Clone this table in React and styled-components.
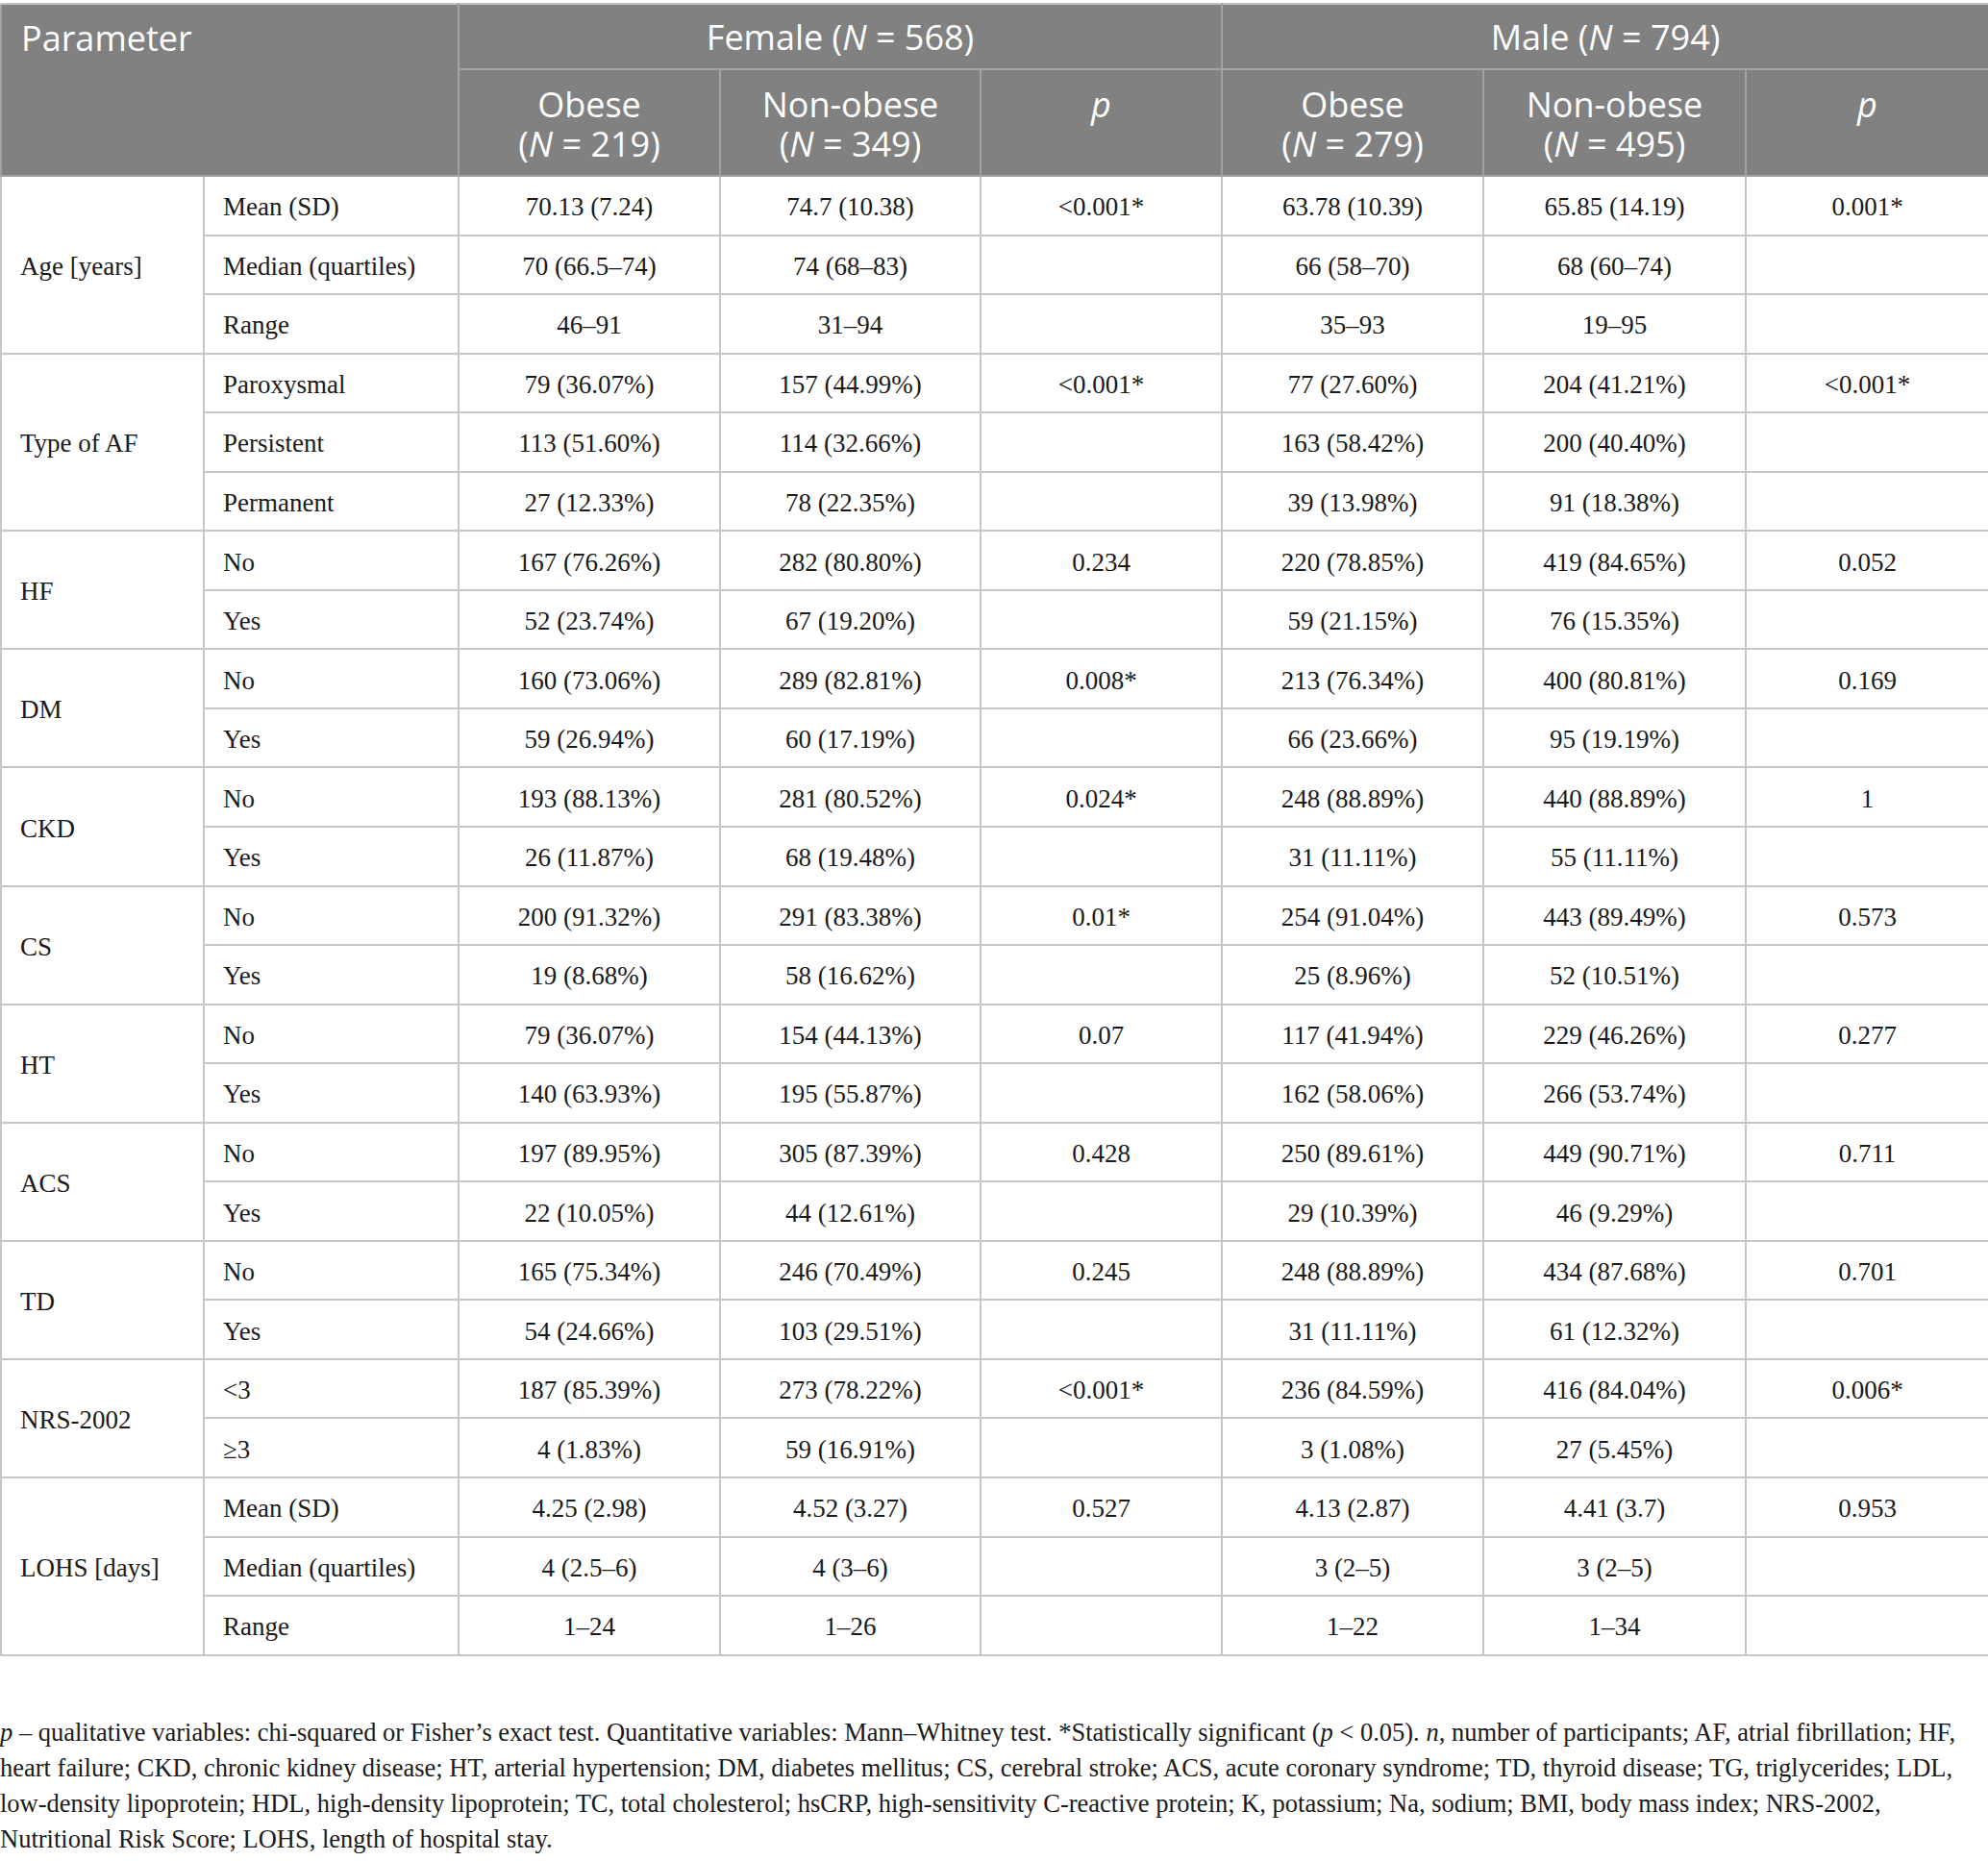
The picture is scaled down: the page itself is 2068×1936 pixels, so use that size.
import React from "react";
import styled, { createGlobalStyle } from "styled-components";

const Global = createGlobalStyle`
  html, body { margin: 0; padding: 0; background: #ffffff; }
  body { font-family: "Liberation Serif", "Times New Roman", serif; color: #1a1a1a; }
`;

const Page = styled.div`
  width: 2068px;
  padding-top: 3px;
  box-sizing: border-box;
`;

const Table = styled.table`
  width: 2068px;
  table-layout: fixed;
  border-collapse: collapse;
  border: 2px solid #c2c2c2;
`;

const HeadRow = styled.tr`
  height: ${(p) => p.$h}px;
`;

const HeadCell = styled.th`
  background: #808180;
  color: #ffffff;
  font-family: "Open Sans", "Noto Sans", sans-serif;
  font-weight: 400;
  font-size: 36px;
  line-height: 41px;
  text-align: ${(p) => (p.$left ? "left" : "center")};
  vertical-align: top;
  padding: ${(p) => (p.$left ? "14px 0 0 20px" : `${p.$pt || 13}px 6px 0`)};
  border: 2px solid #a3a3a3;
  border-top-color: #c2c2c2;
`;

const Row = styled.tr`
  height: 61.55px;
`;

const Cell = styled.td`
  font-size: 27px;
  line-height: 30px;
  text-align: ${(p) => (p.$left ? "left" : "center")};
  padding: ${(p) => (p.$left ? "3px 0 0 19px" : "3px 4px 0")};
  border: 2px solid #c6c6c6;
  white-space: nowrap;
`;

const Footnote = styled.div`
  margin-top: 61px;
  font-size: 26.5px;
  line-height: 37px;
  color: #1a1a1a;
`;

const Line = styled.div`
  white-space: nowrap;
`;

const groups = [
  {
    label: "Age [years]",
    rows: [
      ["Mean (SD)", "70.13 (7.24)", "74.7 (10.38)", "<0.001*", "63.78 (10.39)", "65.85 (14.19)", "0.001*"],
      ["Median (quartiles)", "70 (66.5–74)", "74 (68–83)", "", "66 (58–70)", "68 (60–74)", ""],
      ["Range", "46–91", "31–94", "", "35–93", "19–95", ""],
    ],
  },
  {
    label: "Type of AF",
    rows: [
      ["Paroxysmal", "79 (36.07%)", "157 (44.99%)", "<0.001*", "77 (27.60%)", "204 (41.21%)", "<0.001*"],
      ["Persistent", "113 (51.60%)", "114 (32.66%)", "", "163 (58.42%)", "200 (40.40%)", ""],
      ["Permanent", "27 (12.33%)", "78 (22.35%)", "", "39 (13.98%)", "91 (18.38%)", ""],
    ],
  },
  {
    label: "HF",
    rows: [
      ["No", "167 (76.26%)", "282 (80.80%)", "0.234", "220 (78.85%)", "419 (84.65%)", "0.052"],
      ["Yes", "52 (23.74%)", "67 (19.20%)", "", "59 (21.15%)", "76 (15.35%)", ""],
    ],
  },
  {
    label: "DM",
    rows: [
      ["No", "160 (73.06%)", "289 (82.81%)", "0.008*", "213 (76.34%)", "400 (80.81%)", "0.169"],
      ["Yes", "59 (26.94%)", "60 (17.19%)", "", "66 (23.66%)", "95 (19.19%)", ""],
    ],
  },
  {
    label: "CKD",
    rows: [
      ["No", "193 (88.13%)", "281 (80.52%)", "0.024*", "248 (88.89%)", "440 (88.89%)", "1"],
      ["Yes", "26 (11.87%)", "68 (19.48%)", "", "31 (11.11%)", "55 (11.11%)", ""],
    ],
  },
  {
    label: "CS",
    rows: [
      ["No", "200 (91.32%)", "291 (83.38%)", "0.01*", "254 (91.04%)", "443 (89.49%)", "0.573"],
      ["Yes", "19 (8.68%)", "58 (16.62%)", "", "25 (8.96%)", "52 (10.51%)", ""],
    ],
  },
  {
    label: "HT",
    rows: [
      ["No", "79 (36.07%)", "154 (44.13%)", "0.07", "117 (41.94%)", "229 (46.26%)", "0.277"],
      ["Yes", "140 (63.93%)", "195 (55.87%)", "", "162 (58.06%)", "266 (53.74%)", ""],
    ],
  },
  {
    label: "ACS",
    rows: [
      ["No", "197 (89.95%)", "305 (87.39%)", "0.428", "250 (89.61%)", "449 (90.71%)", "0.711"],
      ["Yes", "22 (10.05%)", "44 (12.61%)", "", "29 (10.39%)", "46 (9.29%)", ""],
    ],
  },
  {
    label: "TD",
    rows: [
      ["No", "165 (75.34%)", "246 (70.49%)", "0.245", "248 (88.89%)", "434 (87.68%)", "0.701"],
      ["Yes", "54 (24.66%)", "103 (29.51%)", "", "31 (11.11%)", "61 (12.32%)", ""],
    ],
  },
  {
    label: "NRS-2002",
    rows: [
      ["<3", "187 (85.39%)", "273 (78.22%)", "<0.001*", "236 (84.59%)", "416 (84.04%)", "0.006*"],
      ["≥3", "4 (1.83%)", "59 (16.91%)", "", "3 (1.08%)", "27 (5.45%)", ""],
    ],
  },
  {
    label: "LOHS [days]",
    rows: [
      ["Mean (SD)", "4.25 (2.98)", "4.52 (3.27)", "0.527", "4.13 (2.87)", "4.41 (3.7)", "0.953"],
      ["Median (quartiles)", "4 (2.5–6)", "4 (3–6)", "", "3 (2–5)", "3 (2–5)", ""],
      ["Range", "1–24", "1–26", "", "1–22", "1–34", ""],
    ],
  },
];

const widths = [211, 265, 272, 271, 251, 272, 273, 253];

const NHead = ({ label, n }) => (
  <>
    {label}
    <br />(<i>N</i> = {n})
  </>
);

export default function App() {
  return (
    <Page>
      <Global />
      <Table>
        <colgroup>
          {widths.map((w, i) => (
            <col key={i} style={{ width: w }} />
          ))}
        </colgroup>
        <thead>
          <HeadRow $h={68}>
            <HeadCell colSpan={2} rowSpan={2} $left>
              Parameter
            </HeadCell>
            <HeadCell colSpan={3} $pt={13}>
              Female (<i>N</i> = 568)
            </HeadCell>
            <HeadCell colSpan={3} $pt={13}>
              Male (<i>N</i> = 794)
            </HeadCell>
          </HeadRow>
          <HeadRow $h={111}>
            <HeadCell $pt={15}>
              <NHead label="Obese" n="219" />
            </HeadCell>
            <HeadCell $pt={15}>
              <NHead label="Non-obese" n="349" />
            </HeadCell>
            <HeadCell $pt={15}>
              <i>p</i>
            </HeadCell>
            <HeadCell $pt={15}>
              <NHead label="Obese" n="279" />
            </HeadCell>
            <HeadCell $pt={15}>
              <NHead label="Non-obese" n="495" />
            </HeadCell>
            <HeadCell $pt={15}>
              <i>p</i>
            </HeadCell>
          </HeadRow>
        </thead>
        <tbody>
          {groups.map((g) =>
            g.rows.map((r, i) => (
              <Row key={g.label + i}>
                {i === 0 && (
                  <Cell rowSpan={g.rows.length} $left>
                    {g.label}
                  </Cell>
                )}
                <Cell $left>{r[0]}</Cell>
                {r.slice(1).map((v, j) => (
                  <Cell key={j}>{v}</Cell>
                ))}
              </Row>
            ))
          )}
        </tbody>
      </Table>
      <Footnote>
        <Line>
          <i>p</i> – qualitative variables: chi-squared or Fisher’s exact test. Quantitative variables: Mann–Whitney test. *Statistically significant (<i>p</i> &lt; 0.05). <i>n</i>, number of participants; AF, atrial fibrillation; HF,
        </Line>
        <Line>
          heart failure; CKD, chronic kidney disease; HT, arterial hypertension; DM, diabetes mellitus; CS, cerebral stroke; ACS, acute coronary syndrome; TD, thyroid disease; TG, triglycerides; LDL,
        </Line>
        <Line>
          low-density lipoprotein; HDL, high-density lipoprotein; TC, total cholesterol; hsCRP, high-sensitivity C-reactive protein; K, potassium; Na, sodium; BMI, body mass index; NRS-2002,
        </Line>
        <Line>Nutritional Risk Score; LOHS, length of hospital stay.</Line>
      </Footnote>
    </Page>
  );
}
